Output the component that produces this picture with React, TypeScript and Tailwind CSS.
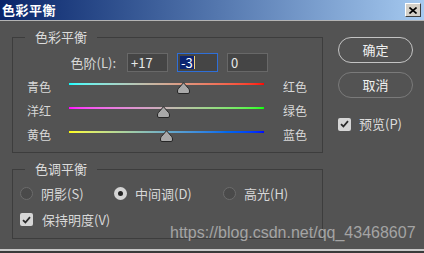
import React from 'react';

const cjk = "font-['Noto_Sans_CJK_SC','Noto_Sans',sans-serif]";

function Thumb({ left }: { left: number }) {
  return (
    <svg
      className="absolute top-[3px]"
      style={{ left }}
      width="13"
      height="12"
      viewBox="0 0 13 12"
    >
      <path
        d="M6.5 0.7 L11.6 6.6 Q12.5 7.6 12.5 9 L12.5 10 Q12.5 11.5 11 11.5 L2 11.5 Q0.5 11.5 0.5 10 L0.5 9 Q0.5 7.6 1.4 6.6 Z"
        fill="#a9a9a9"
        stroke="#262626"
        strokeWidth="1"
      />
    </svg>
  );
}

function SliderRow({ left, right, gradient, thumb }: { left: string; right: string; gradient: string; thumb: number }) {
  return (
    <div className="flex h-[24px]">
      <div className="w-[56px] pl-[14px] text-[12px] leading-[16px] text-[#d8d8d8]">{left}</div>
      <div className="relative w-[195px] h-full">
        <div className={`mt-[4px] h-[2px] w-full ${gradient}`} />
        <Thumb left={thumb} />
      </div>
      <div className="ml-[19px] text-[12px] leading-[16px] text-[#d8d8d8]">{right}</div>
    </div>
  );
}

function Check() {
  return (
    <div className="w-[13px] h-[13px] rounded-[2px] bg-[#d6d6d6] flex items-center justify-center">
      <svg width="9" height="8" viewBox="0 0 9 8">
        <path d="M1 4.2 L3.4 6.5 L8 1.2" fill="none" stroke="#2b2b2b" strokeWidth="1.8" />
      </svg>
    </div>
  );
}

function Radio({ on }: { on?: boolean }) {
  return on ? (
    <div className="w-[13px] h-[13px] rounded-full bg-[#d4d4d4] flex items-center justify-center">
      <div className="w-[5px] h-[5px] rounded-full bg-[#222]" />
    </div>
  ) : (
    <div className="w-[13px] h-[13px] rounded-full border border-[#6c6c6c] bg-[#4a4a4a]" />
  );
}

export default function App() {
  return (
    <div className={`relative w-[424px] h-[253px] bg-[#535353] overflow-hidden ${cjk}`}>
      {/* title bar */}
      <div className="h-[20px] flex items-center justify-between bg-linear-to-r from-[#0a246a] to-[#a6caf0]">
        <span className="ml-[2px] text-[13px] leading-[16px] font-bold text-white tracking-[0.5px]">色彩平衡</span>
        <div className="mr-[3px] w-[16px] h-[14px] bg-[#d4d0c8] border-t border-l border-t-white border-l-white border-b border-r border-b-[#404040] border-r-[#404040] flex items-center justify-center">
          <svg width="8" height="7" viewBox="0 0 8 7">
            <path d="M0.5 0.5 L7.5 6.5 M7.5 0.5 L0.5 6.5" stroke="#000" strokeWidth="1.6" />
          </svg>
        </div>
      </div>
      <div className="h-[1px] bg-[#b4b4b4]" />

      <div className="h-[228px] flex">
        <div className="w-[323px] pl-[12px] pt-[16px]">
          {/* 色彩平衡 group */}
          <div className="relative w-[311px] h-[116px] border border-[#3d3d3d]">
            <div className="absolute left-[12px] -top-[9px] px-[10px] bg-[#535353] text-[13px] leading-[16px] text-[#dcdcdc]">
              色彩平衡
            </div>
            <div className="mt-[15px] flex items-center h-[19px]">
              <div className="w-[114px] pr-[11px] text-right text-[13px] leading-[16px] text-[#d8d8d8]">色阶(L):</div>
              <div className="w-[41px] h-[19px] border border-[#686868] bg-[#454545] pl-[3px] text-[13px] leading-[17px] text-[#e8e8e8]">
                +17
              </div>
              <div className="ml-[9px] w-[41px] h-[19px] border border-[#2f6fd8] bg-[#454545] pl-[2px] flex items-center">
                <span className="bg-[#0c2470] text-white text-[13px] leading-[13px] px-[1px]">-3</span>
                <span className="w-[1px] h-[13px] bg-[#f3d27a]" />
              </div>
              <div className="ml-[9px] w-[41px] h-[19px] border border-[#686868] bg-[#454545] pl-[3px] text-[13px] leading-[17px] text-[#e8e8e8]">
                0
              </div>
            </div>
            <div className="mt-[7px]">
              <SliderRow left="青色" right="红色" gradient="bg-linear-to-r from-[#00ffff] to-[#ff0000]" thumb={108} />
              <SliderRow left="洋红" right="绿色" gradient="bg-linear-to-r from-[#ff00ff] to-[#00ff00]" thumb={88} />
              <SliderRow left="黄色" right="蓝色" gradient="bg-linear-to-r from-[#ffff00] to-[#0000ff]" thumb={91} />
            </div>
          </div>

          {/* 色调平衡 group */}
          <div className="relative mt-[16px] w-[311px] h-[70px] border border-[#3d3d3d] pl-[7px] pt-[17px]">
            <div className="absolute left-[12px] -top-[9px] px-[10px] bg-[#535353] text-[13px] leading-[16px] text-[#dcdcdc]">
              色调平衡
            </div>
            <div className="flex items-center h-[13px] text-[13px] leading-[16px] text-[#d8d8d8]">
              <div className="w-[94px] flex items-center gap-[8px]">
                <Radio />
                <span>阴影(S)</span>
              </div>
              <div className="w-[109px] flex items-center gap-[8px]">
                <Radio on />
                <span>中间调(D)</span>
              </div>
              <div className="flex items-center gap-[8px]">
                <Radio />
                <span>高光(H)</span>
              </div>
            </div>
            <div className="mt-[13px] flex items-center h-[13px] gap-[9px] text-[13px] leading-[16px] text-[#d8d8d8]">
              <Check />
              <span>保持明度(V)</span>
            </div>
          </div>
        </div>

        {/* buttons */}
        <div className="ml-[15px] pt-[16px] flex flex-col">
          <button className="w-[75px] h-[26px] rounded-full border border-[#c4c4c4] text-[13px] text-[#f0f0f0] leading-[16px]">
            确定
          </button>
          <button className="mt-[9px] w-[75px] h-[26px] rounded-full border border-[#7a7a7a] text-[13px] text-[#f0f0f0] leading-[16px]">
            取消
          </button>
          <div className="mt-[18px] flex items-center gap-[8px] text-[13px] leading-[16px] text-[#dcdcdc]">
            <Check />
            <span>预览(P)</span>
          </div>
        </div>
      </div>

      <div className="h-[2px] bg-[#c8c8c8]" />
      <div className="h-[2px] bg-[#3a3a3a]" />

      <div className="absolute left-[170px] top-[224px] text-[16px] leading-[18px] text-[#a4a4a4] font-['Liberation_Sans',Arial,sans-serif]">
        https://blog.csdn.net/qq_43468607
      </div>
    </div>
  );
}
